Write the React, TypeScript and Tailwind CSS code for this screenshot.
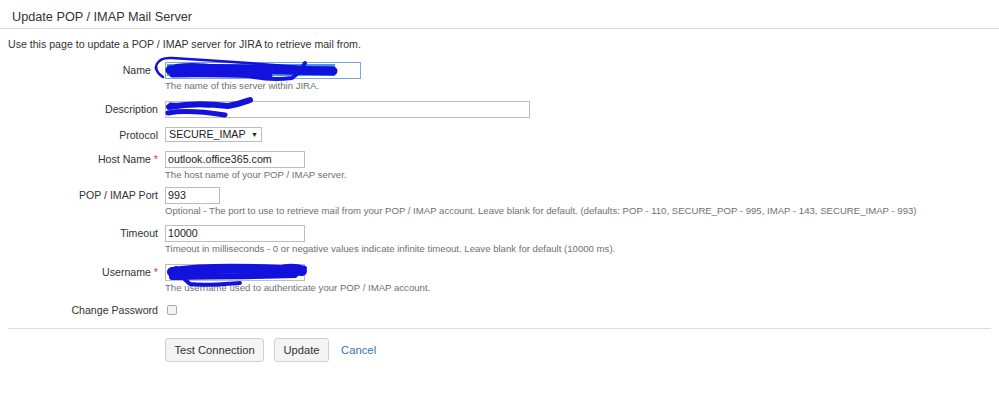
import React from "react";

const font = { fontFamily: '"Liberation Sans", Arial, sans-serif' };

const Req = () => <span className="text-[#d04437]"> *</span>;

type RowProps = {
  label: string;
  required?: boolean;
  help?: string;
  children: React.ReactNode;
  className?: string;
};

const Row = ({ label, required, help, children, className = "" }: RowProps) => (
  <div className={`flex ${className}`}>
    <div className="w-[158px] shrink-0 text-right text-[10.6px] leading-[17px] text-[#333]">
      {label}
      {required && <Req />}
    </div>
    <div className="ml-[7px] flex flex-col items-start">
      {children}
      {help && <div className="text-[9.6px] leading-[13px] text-[#707070] whitespace-nowrap">{help}</div>}
    </div>
  </div>
);

const Input = ({ w, value = "", focus = false }: { w: string; value?: string; focus?: boolean }) => (
  <div
    className={`${w} h-[17px] border ${focus ? "border-[#7aa6dc]" : "border-[#bdbdbd]"} bg-white px-[2px] text-[10.7px] leading-[15px] text-[#222]`}
  >
    {value}
  </div>
);

// redaction scribbles drawn over the form
const Scribbles = () => (
  <svg className="pointer-events-none absolute left-0 top-0" width="999" height="404" viewBox="0 0 999 404">
    <rect x="167" y="64" width="168" height="12" fill="#4b93ea" />
    <g fill="none" stroke="#1212dc" strokeLinecap="round" strokeLinejoin="round">
      <path d="M163 77 C150 68 157 57 172 58 C205 60 250 63 300 67" strokeWidth="2.5" />
      <path d="M170 70 C200 67 240 69 333 71" strokeWidth="9" />
      <path d="M172 75 C200 74 230 75 270 76" strokeWidth="5" />
      <path d="M176 66 C190 64 205 65 218 67" strokeWidth="4" />
      <path d="M245 75 C260 79 275 80 292 78 C300 72 303 67 305 63" strokeWidth="4" />
      <path d="M169 107 C185 104 205 103 228 106 C240 104 247 101 250 100" strokeWidth="6" />
      <path d="M168 113 C185 110 205 112 225 115" strokeWidth="5" />
      <path d="M170 104 L210 106" strokeWidth="3" />
      <path d="M172 272 C200 268 250 268 302 271" strokeWidth="10" />
      <path d="M172 277 C200 276 240 277 295 275" strokeWidth="6" />
      <path d="M176 268 C180 275 185 280 190 284 C205 286 225 284 240 283" strokeWidth="4" />
      <path d="M278 268 C287 265 295 265 305 268" strokeWidth="4" />
    </g>
  </svg>
);

export default function App() {
  return (
    <div className="relative w-[999px] h-[404px] bg-white text-[#333]" style={font}>
      <div className="border-b border-[#dcdcdc] pl-[12px] pt-[10px] pb-[4px]">
        <h1 className="text-[12.7px] leading-[14px] font-normal text-[#333]">Update POP / IMAP Mail Server</h1>
      </div>

      <p className="pl-[8px] pt-[9px] text-[10.6px] leading-[13px] text-[#333]">
        Use this page to update a POP / IMAP server for JIRA to retrieve mail from.
      </p>

      <div className="mt-[11px] flex flex-col">
        <Row label="Name" required help="The name of this server within JIRA.">
          <Input w="w-[196px]" focus />
        </Row>
        <Row label="Description" className="mt-[9px]">
          <Input w="w-[365px]" />
        </Row>
        <Row label="Protocol" className="mt-[9px]">
          <div className="flex h-[15px] w-[97px] items-center justify-between border border-[#bdbdbd] bg-white px-[3px] text-[10.7px] leading-[13px] text-[#222]">
            <span>SECURE_IMAP</span>
            <span className="text-[7px]">▼</span>
          </div>
        </Row>
        <Row label="Host Name" required help="The host name of your POP / IMAP server." className="mt-[7px]">
          <Input w="w-[140px]" value="outlook.office365.com" />
        </Row>
        <Row
          label="POP / IMAP Port"
          help="Optional - The port to use to retrieve mail from your POP / IMAP account. Leave blank for default. (defaults: POP - 110, SECURE_POP - 995, IMAP - 143, SECURE_IMAP - 993)"
          className="mt-[6px]"
        >
          <Input w="w-[55px]" value="993" />
        </Row>
        <Row
          label="Timeout"
          help="Timeout in milliseconds - 0 or negative values indicate infinite timeout. Leave blank for default (10000 ms)."
          className="mt-[8px]"
        >
          <Input w="w-[140px]" value="10000" />
        </Row>
        <Row
          label="Username"
          required
          help="The username used to authenticate your POP / IMAP account."
          className="mt-[9px]"
        >
          <Input w="w-[140px]" />
        </Row>
        <Row label="Change Password" className="mt-[8px]">
          <div className="mt-[3px] ml-[2px] h-[10px] w-[10px] rounded-[2px] border border-[#a8a8a8] bg-[#f4f4f4]" />
        </Row>
      </div>

      <div className="mx-[8px] mt-[9px] border-t border-[#dcdcdc]" />

      <div className="mt-[9px] flex items-center pl-[165px]">
        <button className="h-[24px] w-[99px] rounded-[3px] border border-[#cfcfcf] bg-[#f4f4f4] text-[11.2px] text-[#333]">
          Test Connection
        </button>
        <button className="ml-[10px] h-[24px] w-[55px] rounded-[3px] border border-[#cfcfcf] bg-[#f4f4f4] text-[11.2px] text-[#333]">
          Update
        </button>
        <span className="ml-[12px] text-[11.3px] text-[#3b73af]">Cancel</span>
      </div>

      <Scribbles />
    </div>
  );
}
